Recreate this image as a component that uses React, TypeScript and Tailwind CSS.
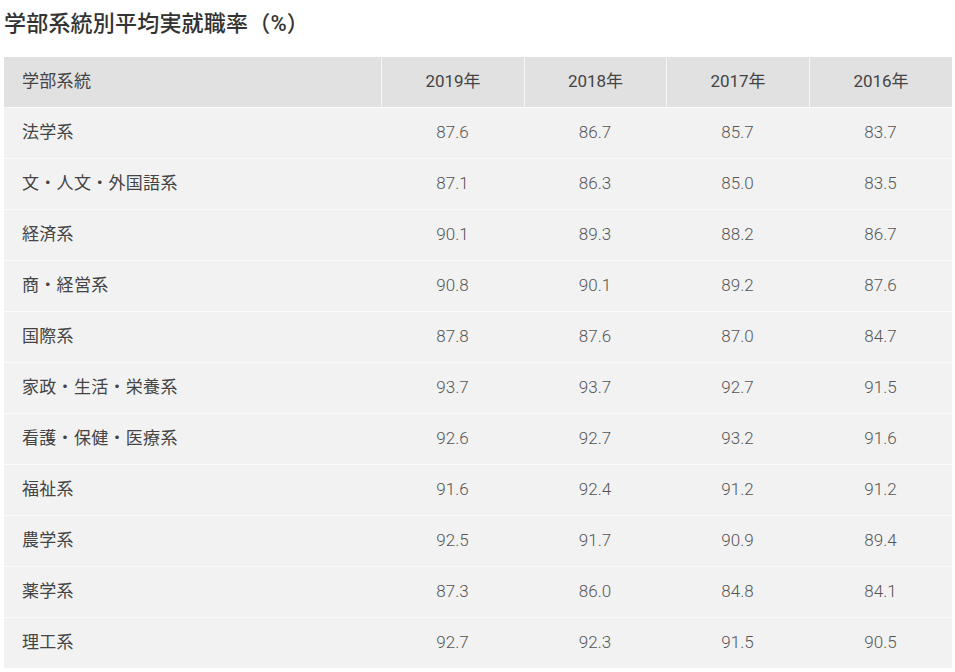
import React from "react";

const rows: [string, string, string, string, string][] = [
  ["法学系", "87.6", "86.7", "85.7", "83.7"],
  ["文・人文・外国語系", "87.1", "86.3", "85.0", "83.5"],
  ["経済系", "90.1", "89.3", "88.2", "86.7"],
  ["商・経営系", "90.8", "90.1", "89.2", "87.6"],
  ["国際系", "87.8", "87.6", "87.0", "84.7"],
  ["家政・生活・栄養系", "93.7", "93.7", "92.7", "91.5"],
  ["看護・保健・医療系", "92.6", "92.7", "93.2", "91.6"],
  ["福祉系", "91.6", "92.4", "91.2", "91.2"],
  ["農学系", "92.5", "91.7", "90.9", "89.4"],
  ["薬学系", "87.3", "86.0", "84.8", "84.1"],
  ["理工系", "92.7", "92.3", "91.5", "90.5"],
];

const years = ["2019年", "2018年", "2017年", "2016年"];

export default function App() {
  return (
    <div
      className="w-[955px] h-[672px] bg-white overflow-hidden"
      style={{ fontFamily: "Roboto, 'Noto Sans CJK JP', sans-serif" }}
    >
      <h1 className="pl-[4px] pt-[9px] h-[57px] text-[22px] leading-[30px] font-medium text-[#333] tracking-[0.2px]">
        学部系統別平均実就職率（%）
      </h1>
      <div className="ml-[4px] w-[948px]">
        <div className="grid grid-cols-[377px_143px_142px_143px_143px] h-[50px] bg-[#e1e1e1] text-[17px] text-[#444]">
          <div className="flex items-center pl-[18px] tracking-[0.3px]">学部系統</div>
          {years.map((y) => (
            <div key={y} className="flex items-center justify-center border-l border-[#f6f6f6]">
              {y}
            </div>
          ))}
        </div>
        {rows.map((r) => (
          <div
            key={r[0]}
            className="grid grid-cols-[377px_143px_142px_143px_143px] h-[51px] bg-[#f2f2f2] border-t border-[#fbfbfb] text-[17px] text-[#555]"
          >
            <div className="flex items-center pl-[18px] text-[#444] tracking-[0.3px]">{r[0]}</div>
            {r.slice(1).map((v, i) => (
              <div key={i} className="flex items-center justify-center font-light">
                {v}
              </div>
            ))}
          </div>
        ))}
      </div>
    </div>
  );
}
